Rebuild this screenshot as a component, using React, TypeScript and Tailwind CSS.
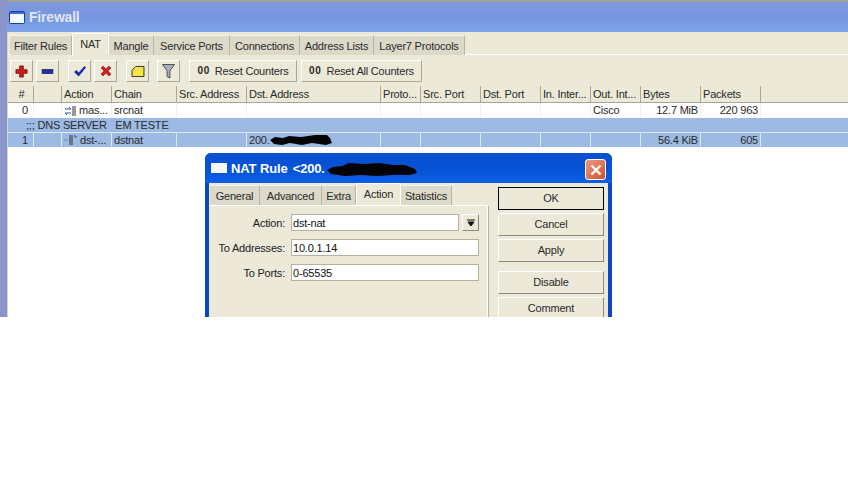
import type { ReactNode } from "react";

const FONT = "font-['Liberation_Sans',Arial,sans-serif]";
const COLS =
  "grid grid-cols-[24px_28px_50px_65px_70px_134px_40px_60px_60px_50px_50px_60px_60px]";

const mainTabs = [
  { label: "Filter Rules", w: "w-[62px]" },
  { label: "NAT", w: "w-[37px]", active: true },
  { label: "Mangle", w: "w-[45px]" },
  { label: "Service Ports", w: "w-[76px]" },
  { label: "Connections", w: "w-[70px]" },
  { label: "Address Lists", w: "w-[74px]" },
  { label: "Layer7 Protocols", w: "w-[91px]" },
];

const dialogTabs = [
  { label: "General", w: "w-[50px]" },
  { label: "Advanced", w: "w-[62px]" },
  { label: "Extra", w: "w-[34px]" },
  { label: "Action", w: "w-[45px]", active: true },
  { label: "Statistics", w: "w-[51px]" },
];

const headers = [
  "#",
  "",
  "Action",
  "Chain",
  "Src. Address",
  "Dst. Address",
  "Proto...",
  "Src. Port",
  "Dst. Port",
  "In. Inter...",
  "Out. Int...",
  "Bytes",
  "Packets",
];

function Tab({ label, w, active }: { label: string; w: string; active?: boolean }) {
  return active ? (
    <div className={`${w} h-[22px] -mt-[2px] bg-[#ece9d8] border-t border-x border-white flex justify-center pt-[5px] relative z-10 -mb-px`}>
      {label}
    </div>
  ) : (
    <div className={`${w} h-5 pt-[2px] bg-[#dcd9c8] border-r border-[#b8b5a4] border-t border-t-[#f4f2e6] flex items-center justify-center`}>
      {label}
    </div>
  );
}

function ToolButton({ w, children, className = "" }: { w: string; children: ReactNode; className?: string }) {
  return (
    <div className={`${w} ${className} h-[22px] bg-[#ece9d8] border border-t-white border-l-white border-r-[#aaa797] border-b-[#aaa797] flex items-center justify-center shrink-0`}>
      {children}
    </div>
  );
}

function Cell({ children, right, line = "border-[#f0f0f0]" }: { children?: ReactNode; right?: boolean; line?: string }) {
  return (
    <div className={`border-r ${line} px-[2px] whitespace-nowrap overflow-hidden flex items-center ${right ? "justify-end" : ""}`}>
      {children}
    </div>
  );
}

function DialogButton({ label, strong, className = "" }: { label: string; strong?: boolean; className?: string }) {
  return (
    <div
      className={`w-[106px] h-[23px] shrink-0 flex items-center justify-center bg-[#ece9d8] border ${
        strong ? "border-black" : "border-t-white border-l-white border-r-[#8e8b7c] border-b-[#8e8b7c]"
      } ${className}`}
    >
      {label}
    </div>
  );
}

function FieldRow({ label, value, children }: { label: string; value: string; children?: ReactNode }) {
  return (
    <div className="flex items-center h-[17px]">
      <div className="w-[76px] text-right text-[#222] pt-[1px]">{label}</div>
      <div className="ml-[6px] flex-1 flex gap-[3px]">
        <div className="flex-1 h-[17px] bg-white border border-[#b5b2a2] px-[1px] pt-[1px] flex items-center text-[#111]">{value}</div>
        {children}
      </div>
    </div>
  );
}

export default function App() {
  return (
    <div className={`${FONT} w-[848px] h-[480px] bg-white overflow-hidden relative text-[11px] tracking-[-0.2px] leading-none text-[#2a2a2a]`}>
      {/* Firewall window */}
      <div className="h-[317px] flex flex-col overflow-hidden border-l-[7px] border-[#8a96ca]">
        <div className="h-[2px] -ml-[7px] bg-[#a3a392] shrink-0" />
        <div className="h-[30px] shrink-0 -ml-[7px] pl-[9px] flex items-center gap-[4px] bg-gradient-to-b from-[#7f9ae0] via-[#7695de] to-[#7ea6ea]">
          <svg viewBox="0 0 16 13" className="w-4 h-[13px]">
            <rect x="0.5" y="0.5" width="15" height="12" rx="1" fill="#f4f8ff" stroke="#1c3f94" />
            <rect x="1" y="1" width="14" height="2" fill="#3a6ad8" />
          </svg>
          <span className="text-[14px] font-bold text-[#dfe6f7] tracking-[-0.2px]">Firewall</span>
        </div>

        <div className="flex-1 bg-white flex flex-col min-h-0 border-l border-[#d4d4cc]">
          <div className="bg-[#ece9d8] h-[54px] shrink-0 flex flex-col">
            <div className="flex pt-[3px] pl-[2px] border-b border-white h-[23px] shrink-0">
              {mainTabs.map((t) => (
                <Tab key={t.label} {...t} />
              ))}
            </div>
            <div className="flex pl-[2px] pt-[5px]">
              <ToolButton w="w-[23px]">
                <svg viewBox="0 0 14 14" className="w-[13px] h-[13px]">
                  <path d="M5 1h4v4h4v4H9v4H5V9H1V5h4z" fill="#d81818" stroke="#5a1010" strokeWidth="0.8" />
                </svg>
              </ToolButton>
              <ToolButton w="w-[23px]" className="ml-[3px]">
                <svg viewBox="0 0 14 6" className="w-[13px] h-[5px]">
                  <rect x="0.5" y="0.5" width="13" height="5" fill="#1f2fa8" stroke="#101a5a" strokeWidth="0.8" />
                </svg>
              </ToolButton>
              <ToolButton w="w-[23px]" className="ml-[9px]">
                <svg viewBox="0 0 14 12" className="w-[14px] h-[12px]">
                  <path d="M1 7l2.5-2 2.2 2.5L11.5 1 13 2.5 5.7 11.5z" fill="#1a2fb0" />
                </svg>
              </ToolButton>
              <ToolButton w="w-[23px]" className="ml-[3px]">
                <svg viewBox="0 0 12 12" className="w-[12px] h-[12px]">
                  <path d="M1 3l2-2 3 3 3-3 2 2-3 3 3 3-2 2-3-3-3 3-2-2 3-3z" fill="#d41a1a" stroke="#701010" strokeWidth="0.5" />
                </svg>
              </ToolButton>
              <ToolButton w="w-[23px]" className="ml-[9px]">
                <svg viewBox="0 0 14 12" className="w-[14px] h-[11px]">
                  <path d="M0.5 4.5L4.5 0.5H13.5V11.5H0.5z" fill="#f7e64a" stroke="#2a2610" />
                </svg>
              </ToolButton>
              <ToolButton w="w-[23px]" className="ml-[8px]">
                <svg viewBox="0 0 14 16" className="w-[13px] h-[15px]">
                  <path d="M0.5 0.5h13L8.5 7v8l-3-1.5V7z" fill="#a9b2bc" stroke="#3c4450" />
                </svg>
              </ToolButton>
              <ToolButton w="w-[108px]" className="ml-[9px]">
                <span className="font-bold mr-[5px] text-[10px] tracking-[0.6px]">00</span>
                Reset Counters
              </ToolButton>
              <ToolButton w="w-[121px]" className="ml-[4px]">
                <span className="font-bold mr-[5px] text-[10px] tracking-[0.6px]">00</span>
                Reset All Counters
              </ToolButton>
            </div>
          </div>

          {/* Rules table */}
          <div className="h-[17px] shrink-0 bg-[#ece9d8] border-b border-[#a8a598]">
            <div className={`${COLS} h-[16px] pl-[2px]`}>
              {headers.map((h, i) => (
                <div key={i} className={`border-r border-[#aca899] px-[2px] flex items-center whitespace-nowrap overflow-hidden ${i === 0 ? "justify-center" : ""}`}>
                  {h}
                </div>
              ))}
            </div>
          </div>

          <div className={`${COLS} h-[15px] pl-[2px] shrink-0`}>
            <div className="border-r border-[#f0f0f0] flex items-center justify-end pr-[5px]">0</div>
            <Cell />
            <Cell>
              <svg viewBox="0 0 13 10" className="w-[13px] h-[10px] mr-[2px] shrink-0">
                <path d="M1 3h6M5 1l2 2M1 7h6M1 7l2 2" stroke="#2a55a0" fill="none" />
                <path d="M9 0v10M11 0v10" stroke="#333" />
              </svg>
              mas...
            </Cell>
            <Cell>srcnat</Cell>
            <Cell />
            <Cell />
            <Cell />
            <Cell />
            <Cell />
            <Cell />
            <Cell>Cisco</Cell>
            <Cell right>12.7 MiB</Cell>
            <Cell right>220 963</Cell>
          </div>

          <div className="h-[14px] shrink-0 bg-[#9cbae4] pl-[18px] flex items-center whitespace-pre">;;; DNS SERVER   EM TESTE</div>

          <div className={`${COLS} h-[15px] pl-[2px] shrink-0 bg-[#9cbae4] border-t border-[#dfe8f6]`}>
            <div className="border-r border-[#dfe8f6] flex items-center justify-end pr-[5px]">1</div>
            <Cell line="border-[#dfe8f6]" />
            <Cell line="border-[#dfe8f6]">
              <svg viewBox="0 0 13 10" className="w-[13px] h-[10px] mr-[3px] shrink-0">
                <path d="M0 5h4" stroke="#5f8fb0" />
                <path d="M6 0v10M8 0v10" stroke="#333" />
                <path d="M10 1h2v2" stroke="#555" fill="none" />
              </svg>
              dst-...
            </Cell>
            <Cell line="border-[#dfe8f6]">dstnat</Cell>
            <Cell line="border-[#dfe8f6]" />
            <Cell line="border-[#dfe8f6]">
              200.
              <svg viewBox="0 0 64 12" className="w-[64px] h-[12px] -ml-[1px] shrink-0">
                <path d="M1 6L6 3l8 1 6-2 12 1 14-2 12 0 3 3 2 5-6 2-14-2-10 2-12-2-8 2-8-1z" fill="#050505" />
              </svg>
            </Cell>
            <Cell line="border-[#dfe8f6]" />
            <Cell line="border-[#dfe8f6]" />
            <Cell line="border-[#dfe8f6]" />
            <Cell line="border-[#dfe8f6]" />
            <Cell line="border-[#dfe8f6]" />
            <Cell right line="border-[#dfe8f6]">56.4 KiB</Cell>
            <Cell right line="border-[#dfe8f6]">605</Cell>
          </div>
        </div>
      </div>

      {/* NAT Rule dialog */}
      <div className="absolute left-[205px] top-[153px] w-[407px] h-[164px] rounded-t-[6px] overflow-hidden bg-[#0a48c4] px-[4px] flex flex-col">
        <div className="h-[30px] shrink-0 -mx-[4px] px-[6px] flex items-center gap-[4px] bg-gradient-to-b from-[#0a4fd0] via-[#0653d6] to-[#0a5ee8] relative">
          <svg viewBox="0 0 16 10" className="w-4 h-[10px]">
            <rect width="16" height="10" fill="#f4f6fc" />
          </svg>
          <span className="text-[13px] font-bold text-white tracking-[-0.1px]">NAT Rule</span>
          <span className="text-[13px] font-bold text-white ml-[1px]">&lt;200.</span>
          <svg viewBox="0 0 92 14" aria-hidden="true" className="absolute left-[121px] top-[9px] w-[92px] h-[14px]">
            <path d="M1 8l6-3 9-1 7-3 16 1 14-1 14 2 12 0 10 4 2 4-8 2-16 0-16 1-16-1-16 1-14-2z" fill="#030303" />
          </svg>
          <div className="absolute right-[6px] top-[6px] w-[21px] h-[21px] rounded-[3px] border border-white bg-gradient-to-br from-[#eb9a7e] to-[#d0502c] flex items-center justify-center">
            <svg viewBox="0 0 12 12" className="w-[12px] h-[12px]">
              <path d="M1.5 1.5l9 9M10.5 1.5l-9 9" stroke="#fff" strokeWidth="2.4" />
            </svg>
          </div>
        </div>

        <div className="flex-1 bg-[#ece9d8] flex">
          <div className="w-[279px] shrink-0 flex flex-col">
            <div className="flex pt-[2px] pl-[1px] h-[23px] shrink-0 border-b border-white">
              {dialogTabs.map((t) => (
                <Tab key={t.label} {...t} />
              ))}
            </div>
            <div className="flex-1 border-r border-white shadow-[1px_0_0_#b8b5a4] pt-[8px] pr-[8px] flex flex-col gap-[8px]">
              <FieldRow label="Action:" value="dst-nat">
                <div className="w-[17px] h-[17px] border border-t-white border-l-white border-r-[#8e8b7c] border-b-[#8e8b7c] flex items-center justify-center">
                  <svg viewBox="0 0 8 8" className="w-2 h-2">
                    <path d="M0 1h8M4 7L1 3h6z" stroke="#111" fill="#111" />
                  </svg>
                </div>
              </FieldRow>
              <FieldRow label="To Addresses:" value="10.0.1.14" />
              <FieldRow label="To Ports:" value="0-65535" />
            </div>
          </div>
          <div className="ml-[10px] pt-[4px] flex flex-col">
            <DialogButton label="OK" strong />
            <DialogButton label="Cancel" className="mt-[3px]" />
            <DialogButton label="Apply" className="mt-[3px]" />
            <DialogButton label="Disable" className="mt-[9px]" />
            <DialogButton label="Comment" className="mt-[3px]" />
          </div>
        </div>
      </div>
    </div>
  );
}
